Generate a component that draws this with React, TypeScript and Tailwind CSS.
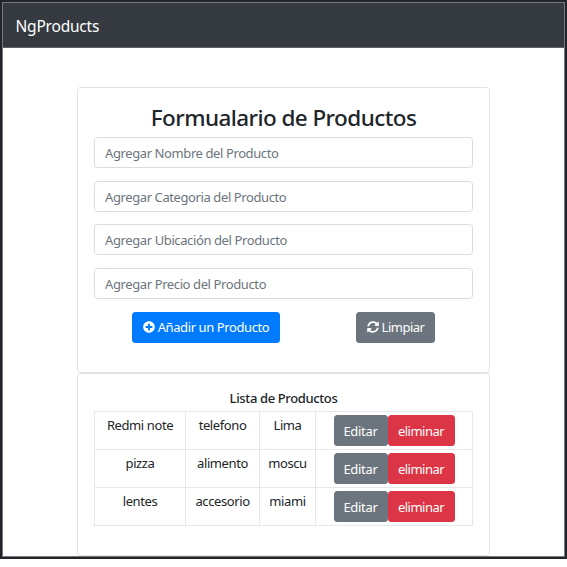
import { FaPlusCircle, FaSyncAlt } from 'react-icons/fa';

const fields = [
  { text: 'Agregar Nombre del Producto', spacing: 'tracking-[-0.4px] pt-[2px]' },
  { text: 'Agregar Categoria del Producto', spacing: 'tracking-[-0.4px] pt-[2px]' },
  { text: 'Agregar Ubicación del Producto', spacing: 'tracking-[-0.39px]' },
  { text: 'Agregar Precio del Producto', spacing: 'tracking-[-0.39px] pt-[2px]' },
];

const products = [
  ['Redmi note', 'telefono', 'Lima'],
  ['pizza', 'alimento', 'moscu'],
  ['lentes', 'accesorio', 'miami'],
];

const button = 'flex h-[31px] items-center justify-center rounded-[3.5px] text-[13px] text-white whitespace-nowrap';

export default function App() {
  return (
    <div className="h-[567px] w-[567px] overflow-hidden bg-white font-['Noto_Sans','Open_Sans',sans-serif] text-[13px] text-[#212529]">
      <div className="h-[559px] border-2 border-[#212529]">
        <div className="flex h-[555px] flex-col border border-[#77797c] bg-white">
          <nav className="flex h-[45px] shrink-0 items-center border-b border-[#5f6265] bg-[#343a40] pl-[12.5px] pt-[3px] text-[15.5px] tracking-[-0.2px] text-white">
            NgProducts
          </nav>
          <main className="ml-[74px] mt-[38.6px] w-[413px]">
            <section className="h-[286.4px] rounded-[3.5px] border border-[#e2e2e2] px-4 pt-[14.4px]">
              <h1 className="h-[35px] text-center text-[22.5px] font-medium leading-[31px] tracking-[-0.57px]">
                Formualario de Productos
              </h1>
              <form>
                <div className="flex flex-col gap-[12.67px]">
                  {fields.map((field) => (
                    <input
                      key={field.text}
                      placeholder={field.text}
                      className={`block h-[31px] w-[379px] rounded-[3.5px] border border-[#d9dde2] px-[10px] text-[13px] placeholder:text-[#6c757d] ${field.spacing}`}
                    />
                  ))}
                </div>
                <div className="mt-[13px] flex pl-[38px]">
                  <button type="button" className={`${button} w-[148px] gap-[3px] bg-[#007bff]`}>
                    <FaPlusCircle size={12} />
                    <span className="tracking-[-0.4px]">Añadir un Producto</span>
                  </button>
                  <button type="button" className={`${button} ml-[76px] w-[79px] gap-[3px] bg-[#6c757d]`}>
                    <FaSyncAlt size={12} />
                    <span className="tracking-[-0.5px]">Limpiar</span>
                  </button>
                </div>
              </form>
            </section>
            <section className="h-[183px] rounded-[3.5px] border border-[#e2e2e2] px-4 pt-[13px]">
              <h2 className="h-6 text-center text-[13px] font-medium leading-[22px] tracking-[-0.37px]">Lista de Productos</h2>
              <div className="border-l border-t border-[#e5e8eb]">
                {products.map((row) => (
                  <div key={row[0]} className="grid h-[38px] grid-cols-[91px_74px_56px_157px]">
                    {row.map((cell) => (
                      <div key={cell} className="border-b border-r border-[#e5e8eb] pt-[3px] text-center leading-5 tracking-[-0.4px]">
                        {cell}
                      </div>
                    ))}
                    <div className="flex justify-center border-b border-r border-[#e5e8eb] pt-[3px]">
                      <button type="button" className={`${button} w-[54px] bg-[#6c757d] pt-[2px] tracking-[-0.3px]`}>Editar</button>
                      <button type="button" className={`${button} w-[67px] bg-[#dc3545] pt-[2px] tracking-[-0.5px]`}>eliminar</button>
                    </div>
                  </div>
                ))}
              </div>
            </section>
          </main>
        </div>
      </div>
    </div>
  );
}
